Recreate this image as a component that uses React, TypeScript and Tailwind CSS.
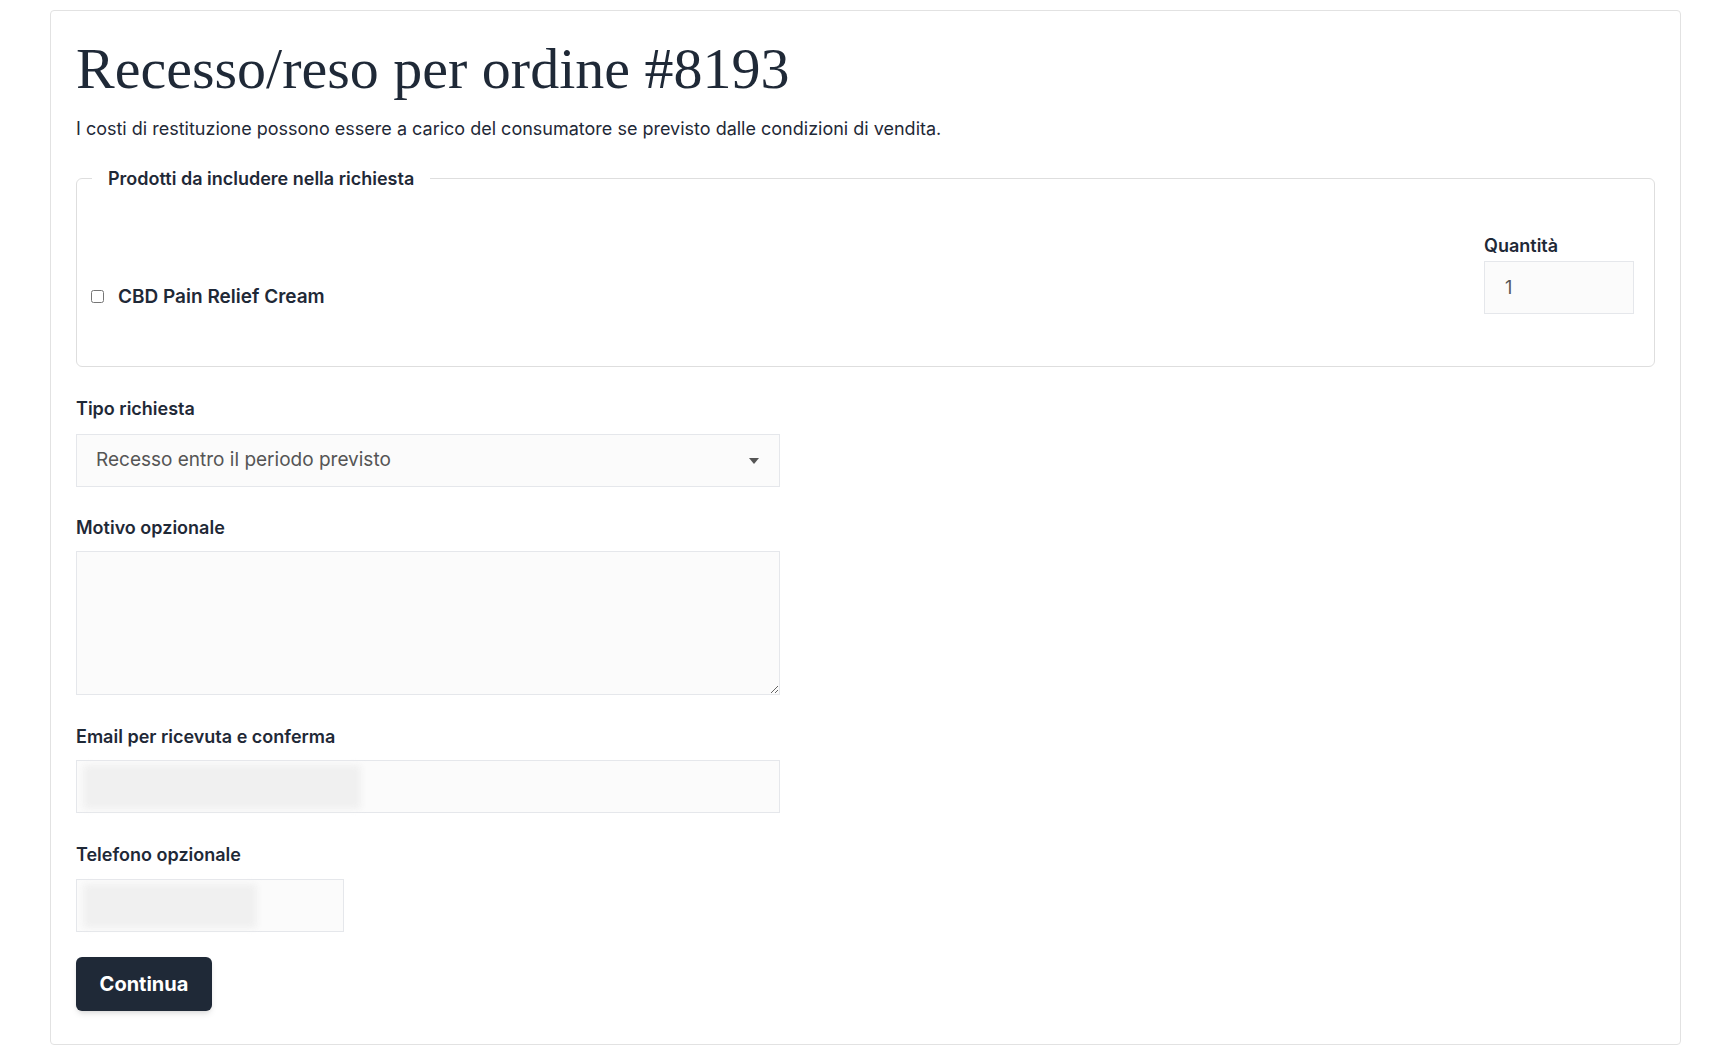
export default function App() {
  const inter = { fontFamily: 'Inter, "Noto Sans", sans-serif' };
  const label = "block text-[18px] font-semibold text-[#1f2937] leading-[24px]";
  const field = "border border-[#e5e7eb] bg-[#fbfbfb]";
  return (
    <div className="bg-white min-h-[1047px] pt-[10px] pl-[50px] pr-[40px]" style={inter}>
      <div className="border border-[#e2e2e2] rounded-[4px] h-[1035px] px-[25px] pt-[26px]">
        <h1 className="text-[58px] leading-[64px] text-[#1f2937]" style={{ fontFamily: '"Liberation Serif", serif' }}>
          Recesso/reso per ordine #8193
        </h1>
        <p className="mt-[16px] text-[18px] leading-[24px] text-[#1f2937]">
          I costi di restituzione possono essere a carico del consumatore se previsto dalle condizioni di vendita.
        </p>
        <fieldset className="mt-[24px] border border-[#dedede] rounded-[6px] h-[202px] pl-[14px] pr-[20px]">
          <legend className="px-[16px] ml-[1px] text-[18px] font-semibold text-[#1f2937]">Prodotti da includere nella richiesta</legend>
          <div className="flex items-end justify-between pt-[42px]">
            <label className="flex items-center gap-[14px] mb-[3px] text-[19px] font-semibold text-[#1f2937]">
              <input type="checkbox" className="w-[13px] h-[13px]" />
              CBD Pain Relief Cream
            </label>
            <div>
              <div className={label}>Quantità</div>
              <div className={`${field} mt-[3px] w-[150px] h-[53px] flex items-center px-[20px] text-[18px] text-[#555]`}>1</div>
            </div>
          </div>
        </fieldset>
        <div className="mt-[30px]">
          <div className={label}>Tipo richiesta</div>
          <div className={`${field} mt-[13px] w-[704px] h-[53px] flex items-center justify-between px-[19px] text-[19px] text-[#555]`}>
            <span>Recesso entro il periodo previsto</span>
            <svg width="12" height="8" viewBox="0 0 12 8"><path d="M1 1h10L6 7z" fill="#555" /></svg>
          </div>
        </div>
        <div className="mt-[29px]">
          <div className={label}>Motivo opzionale</div>
          <textarea className={`${field} mt-[11px] block w-[704px] h-[144px]`} />
        </div>
        <div className="mt-[30px]">
          <div className={label}>Email per ricevuta e conferma</div>
          <div className={`${field} mt-[11px] w-[704px] h-[53px] flex items-center px-[6px]`}>
            <div className="w-[278px] h-[44px] bg-[#f0f0f0] blur-[3px] rounded" />
          </div>
        </div>
        <div className="mt-[30px]">
          <div className={label}>Telefono opzionale</div>
          <div className={`${field} mt-[12px] w-[268px] h-[53px] flex items-center px-[6px]`}>
            <div className="w-[174px] h-[44px] bg-[#f0f0f0] blur-[3px] rounded" />
          </div>
        </div>
        <button className="mt-[25px] w-[136px] h-[54px] rounded-[6px] bg-[#1f2937] text-white text-[20px] font-bold shadow-md">
          Continua
        </button>
      </div>
    </div>
  );
}
